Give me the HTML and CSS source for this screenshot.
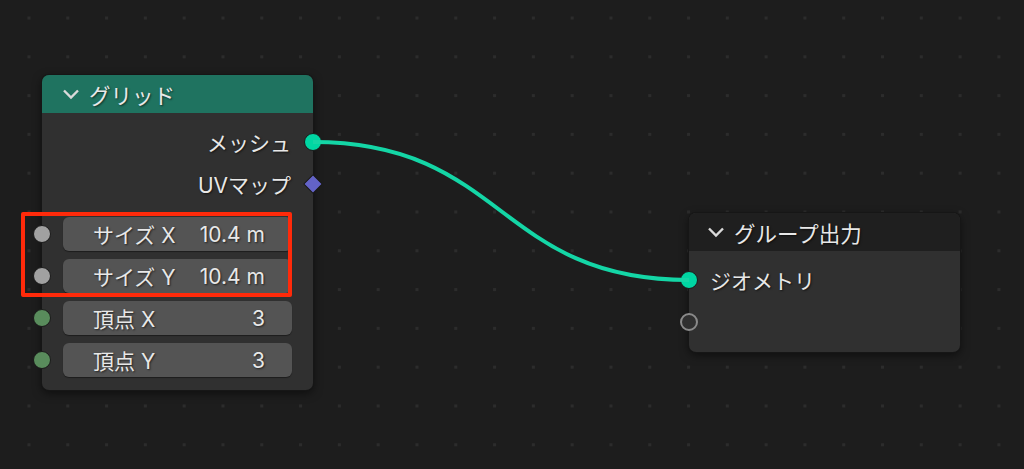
FILE: index.html
```html
<!doctype html>
<html lang="ja">
    <head>
        <meta charset="UTF-8" />
        <title>ジオメトリノード</title>
        <link rel="stylesheet" href="styles.css">
    </head>
    <body>
        <div class="canvas">
            <!-- link between the two nodes -->
            <svg class="links" width="1024" height="469" viewBox="0 0 1024 469">
                <path d="M313 142 C 505 142, 497 280, 689 280" />
            </svg>

            <div class="node node-grid">
                <div class="node-header header-green">
                    <svg class="chevron" width="18" height="12" viewBox="0 0 18 12">
                        <polyline points="2,2.5 9,9.5 16,2.5" />
                    </svg>
                    <span>グリッド</span>
                </div>
                <div class="node-body">
                    <div class="row row-out">
                        <span>メッシュ</span>
                        <span class="socket socket-right socket-geo"></span>
                    </div>
                    <div class="row row-out">
                        <span>UVマップ</span>
                        <span class="socket socket-right socket-diamond"></span>
                    </div>
                    <div class="inputs">
                        <div class="row row-in">
                            <span class="socket socket-left socket-float"></span>
                            <div class="field"><span>サイズ X</span><span>10.4 m</span></div>
                        </div>
                        <div class="row row-in">
                            <span class="socket socket-left socket-float"></span>
                            <div class="field"><span>サイズ Y</span><span>10.4 m</span></div>
                        </div>
                        <div class="row row-in">
                            <span class="socket socket-left socket-int"></span>
                            <div class="field"><span>頂点 X</span><span>3</span></div>
                        </div>
                        <div class="row row-in">
                            <span class="socket socket-left socket-int"></span>
                            <div class="field"><span>頂点 Y</span><span>3</span></div>
                        </div>
                    </div>
                </div>
            </div>

            <div class="node node-output">
                <div class="node-header header-dark">
                    <svg class="chevron" width="18" height="12" viewBox="0 0 18 12">
                        <polyline points="2,2.5 9,9.5 16,2.5" />
                    </svg>
                    <span>グループ出力</span>
                </div>
                <div class="node-body">
                    <div class="row row-label">
                        <span class="socket socket-left socket-geo"></span>
                        <span>ジオメトリ</span>
                    </div>
                    <div class="row row-label">
                        <span class="socket socket-left socket-empty"></span>
                    </div>
                </div>
            </div>

            <div class="highlight"></div>
        </div>
    </body>
</html>
```

FILE: styles.css
```css
* {
    box-sizing: border-box;
}
body {
    margin: 0;
    background-color: #1d1d1d;
    font-family: Inter, "Noto Sans CJK JP", sans-serif;
    font-size: 21px;
    color: #e8e8e8;
}
.canvas {
    position: relative;
    width: 1024px;
    height: 469px;
    overflow: hidden;
    background-color: #1d1d1d;
    background-image: radial-gradient(circle, #2c2c2c 1.5px, transparent 2px);
    background-size: 38.8px 38.8px;
    background-position: 9.6px -1.4px;
}
.links {
    position: absolute;
    left: 0;
    top: 0;
    z-index: 2;
    pointer-events: none;
}
.links path {
    fill: none;
    stroke: #14d6a6;
    stroke-width: 4;
}
.node {
    position: absolute;
    z-index: 1;
    width: 271px;
    background-color: #303030;
    border-radius: 7px;
    box-shadow: 0 0 0 1px #161616, 0 3px 10px rgba(0, 0, 0, 0.55);
}
.node-grid {
    left: 42px;
    top: 75px;
}
.node-output {
    left: 689px;
    top: 213px;
}
.node-header {
    height: 38px;
    display: flex;
    align-items: center;
    gap: 9px;
    padding-left: 20px;
    font-size: 21.5px;
    border-radius: 7px 7px 0 0;
    text-shadow: 1px 1px 2px rgba(0, 0, 0, 0.6);
}
.header-green {
    background-color: #1f7360;
}
.header-dark {
    background-color: #1f1f1f;
    padding-left: 18px;
}
.chevron polyline {
    fill: none;
    stroke: #dadada;
    stroke-width: 2.4;
}
.node-body {
    padding: 8px 0 9px;
}
.row {
    position: relative;
    height: 42px;
    display: flex;
    align-items: center;
    text-shadow: 1px 1px 2px rgba(0, 0, 0, 0.6);
}
.row-out {
    justify-content: flex-end;
    padding-right: 22px;
}
.row-label {
    padding-left: 21px;
}
.inputs {
    margin-top: 8px;
}
.field {
    flex: 1;
    height: 34px;
    margin: 0 21px;
    padding: 0 27px 0 30px;
    display: flex;
    align-items: center;
    justify-content: space-between;
    background-color: #545454;
    border-radius: 6px;
    box-shadow: 0 1px 1px rgba(0, 0, 0, 0.4);
}
.socket {
    position: absolute;
    top: 50%;
    width: 18px;
    height: 18px;
    margin-top: -9px;
    border-radius: 50%;
    border: 1.5px solid #1a1a1a;
}
.socket-right {
    right: -9px;
}
.socket-left {
    left: -9px;
}
.socket-geo {
    background-color: #00d6a3;
}
.socket-float {
    background-color: #a1a1a1;
}
.socket-int {
    background-color: #598c5c;
}
.socket-empty {
    background-color: #303030;
    border: 2px solid #8a8a8a;
}
.socket-diamond {
    width: 14px;
    height: 14px;
    margin-top: -7px;
    right: -7px;
    border-radius: 1px;
    transform: rotate(45deg);
    background-color: #6363c7;
    border: 1px solid #1a1a1a;
}
.highlight {
    position: absolute;
    z-index: 3;
    left: 21px;
    top: 212px;
    width: 271px;
    height: 85px;
    border: 4px solid #ff2a0a;
    border-radius: 2px;
}
```
